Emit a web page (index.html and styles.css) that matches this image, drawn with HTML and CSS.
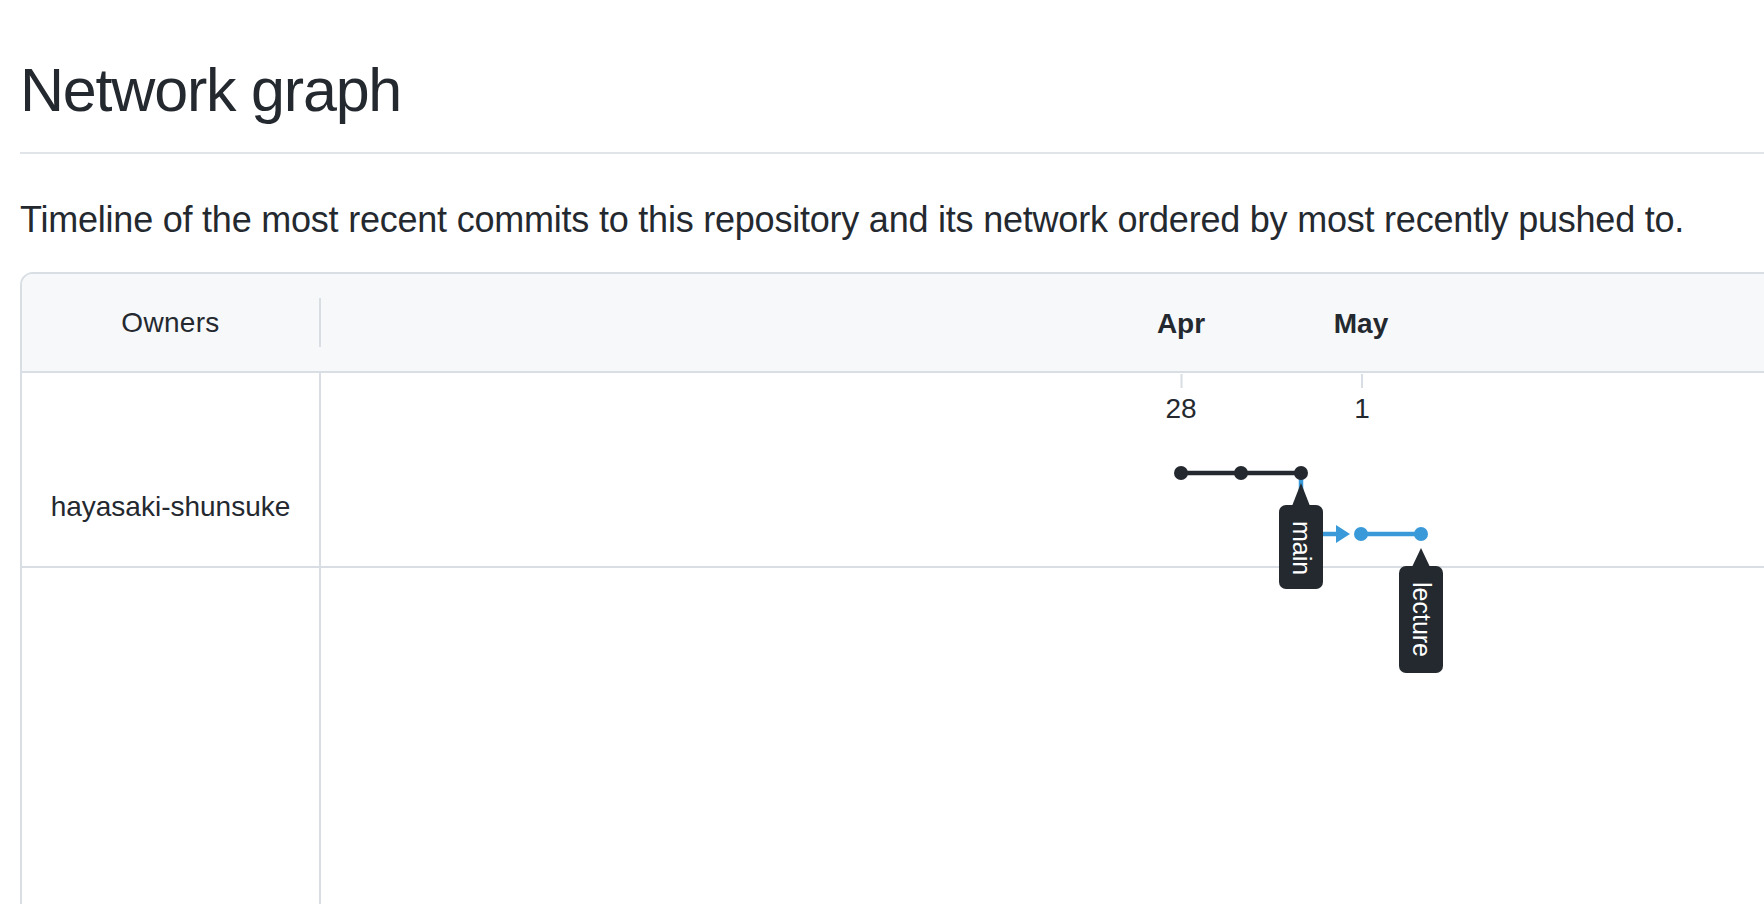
FILE: index.html
```html
<!DOCTYPE html>
<html lang="en">
<head>
    <meta charset="UTF-8">
    <meta name="viewport" content="width=device-width, initial-scale=1.0">
    <title>Network graph</title>
    <link rel="stylesheet" href="styles.css">
</head>
<body>
    <div class="page">
        <!-- Header -->
        <div class="subhead">
            <h2 class="subhead-heading">Network graph</h2>
        </div>

        <p class="network-desc">Timeline of the most recent commits to this repository and its network ordered by most recently pushed to.</p>

        <!-- Network box -->
        <div class="network">
            <div class="network-head">
                <div class="owners-title">Owners</div>
                <div class="head-divider"></div>
                <div class="head-timeline"></div>
            </div>

            <div class="network-body">
                <div class="owner-cell owner-row">hayasaki-shunsuke</div>
                <div class="graph-cell owner-row"></div>
                <div class="owner-cell owner-rest"></div>
                <div class="graph-cell owner-rest"></div>
            </div>

            <!-- Graph canvas: coordinates are the content -->
            <svg class="graph-canvas" width="1900" height="700" viewBox="0 0 1900 700">
                <g class="months">
                    <text x="1159" y="59">Apr</text>
                    <text x="1339" y="59">May</text>
                </g>
                <g class="ticks">
                    <line x1="1159.5" y1="100" x2="1159.5" y2="114"></line>
                    <line x1="1340" y1="100" x2="1340" y2="114"></line>
                </g>
                <g class="days">
                    <text x="1159" y="144">28</text>
                    <text x="1340" y="144">1</text>
                </g>

                <!-- lecture branch -->
                <path class="branch-blue" d="M1279 199 V260 H1316"></path>
                <polygon class="arrow-blue" points="1314,251 1328,260 1314,269"></polygon>
                <line class="branch-blue" x1="1339" y1="260" x2="1399" y2="260"></line>
                <circle class="commit-blue" cx="1339" cy="260" r="7"></circle>
                <circle class="commit-blue" cx="1399" cy="260" r="7"></circle>

                <!-- main branch -->
                <line class="branch-dark" x1="1159" y1="199" x2="1279" y2="199"></line>
                <circle class="commit-dark" cx="1159" cy="199" r="7"></circle>
                <circle class="commit-dark" cx="1219" cy="199" r="7"></circle>
                <circle class="commit-dark" cx="1279" cy="199" r="7"></circle>

                <!-- labels -->
                <g class="ref-label">
                    <polygon points="1279,209 1288,232 1270,232"></polygon>
                    <rect x="1257" y="231" width="44" height="84" rx="7"></rect>
                    <text transform="translate(1271 274) rotate(90)">main</text>
                </g>
                <g class="ref-label">
                    <polygon points="1399,274 1408,293 1390,293"></polygon>
                    <rect x="1377" y="292" width="44" height="107" rx="7"></rect>
                    <text transform="translate(1391 345.5) rotate(90)">lecture</text>
                </g>
            </svg>
        </div>
    </div>
</body>
</html>
```

FILE: styles.css
```css
:root {
    --text-color: #24292f;
    --border-color: #d8dee4;
    --rule-color: #e1e4e8;
    --head-bg: #f6f8fa;
    --branch-blue: #3a9ad9;
}

html, body {
    height: 100%;
}

body {
    font-family: 'Liberation Sans', Arial, sans-serif;
    margin: 0;
    padding: 0;
    background: #fff;
    color: var(--text-color);
    overflow: hidden;
}

.page {
    padding-left: 20px;
}

/* Заголовок */
.subhead {
    padding-top: 52px;
    padding-bottom: 24px;
    border-bottom: 2px solid var(--rule-color);
}

.subhead-heading {
    margin: 0;
    font-size: 61px;
    font-weight: 400;
    line-height: 76px;
    letter-spacing: -1.2px;
}

.network-desc {
    margin: 39px 0 25px;
    font-size: 36px;
    line-height: 54px;
    letter-spacing: -0.22px;
}

/* Сеть */
.network {
    position: relative;
    width: 1900px;
    border: 2px solid var(--border-color);
    border-radius: 13px;
    overflow: hidden;
}

.network-head {
    display: flex;
    align-items: center;
    height: 97px;
    background: var(--head-bg);
    border-bottom: 2px solid var(--border-color);
}

.owners-title {
    width: 297px;
    text-align: center;
    font-size: 28px;
    line-height: 40px;
    letter-spacing: 0.3px;
}

.head-divider {
    width: 2px;
    height: 49px;
    background: var(--border-color);
}

.head-timeline {
    flex: 1;
}

.network-body {
    display: grid;
    grid-template-columns: 299px 1fr;
}

.owner-cell {
    box-sizing: border-box;
    border-right: 2px solid var(--border-color);
    text-align: center;
    font-size: 28px;
    line-height: 40px;
}

.owner-row {
    box-sizing: border-box;
    height: 195px;
    padding-top: 114px;
    border-bottom: 2px solid var(--border-color);
}

.owner-rest {
    height: 600px;
}

/* Холст графа */
.graph-canvas {
    position: absolute;
    top: 0;
    left: 0;
    pointer-events: none;
    overflow: visible;
}

.graph-canvas text {
    font-family: 'Liberation Sans', Arial, sans-serif;
}

.months text {
    font-size: 28px;
    font-weight: 700;
    fill: var(--text-color);
    text-anchor: middle;
}

.ticks line {
    stroke: var(--border-color);
    stroke-width: 2;
}

.days text {
    font-size: 28px;
    fill: var(--text-color);
    text-anchor: middle;
}

.branch-dark {
    stroke: var(--text-color);
    stroke-width: 4.5;
    fill: none;
}

.branch-blue {
    stroke: var(--branch-blue);
    stroke-width: 4.5;
    fill: none;
}

.arrow-blue,
.commit-blue {
    fill: var(--branch-blue);
}

.commit-dark {
    fill: var(--text-color);
}

.ref-label rect,
.ref-label polygon {
    fill: var(--text-color);
}

.ref-label text {
    font-size: 25px;
    fill: #fff;
    text-anchor: middle;
}
```
